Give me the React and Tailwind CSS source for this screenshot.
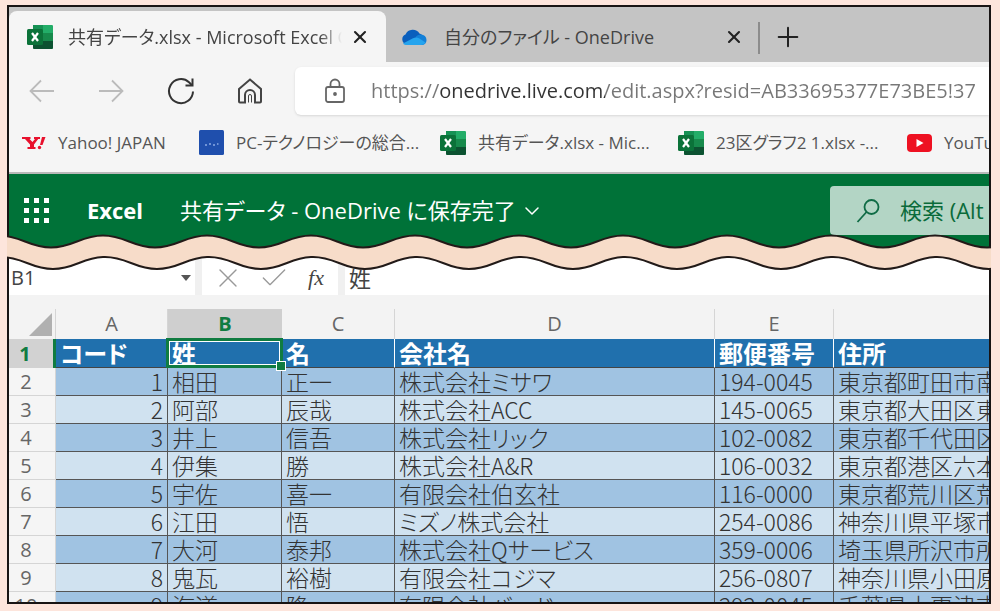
import { useState } from "react";
import { Check, ChevronDown, Plus, X } from "lucide-react";

const HEADERS = ["コード", "姓", "名", "会社名", "郵便番号", "住所"];

const ROWS = [
  [1, "相田", "正一", "株式会社ミサワ", "194-0045", "東京都町田市南成瀬"],
  [2, "阿部", "辰哉", "株式会社ACC", "145-0065", "東京都大田区東雪谷"],
  [3, "井上", "信吾", "株式会社リック", "102-0082", "東京都千代田区一番町"],
  [4, "伊集", "勝", "株式会社A&R", "106-0032", "東京都港区六本木"],
  [5, "宇佐", "喜一", "有限会社伯玄社", "116-0000", "東京都荒川区荒川"],
  [6, "江田", "悟", "ミズノ株式会社", "254-0086", "神奈川県平塚市田村"],
  [7, "大河", "泰邦", "株式会社Qサービス", "359-0006", "埼玉県所沢市所沢新町"],
  [8, "鬼瓦", "裕樹", "有限会社コジマ", "256-0807", "神奈川県小田原市"],
  [9, "海道", "隆", "有限会社バード", "292-0045", "千葉県木更津市"],
];

const COLUMNS = ["A", "B", "C", "D", "E", "F"];

function ExcelIcon() {
  return (
    <svg viewBox="0 0 26 26" className="size-[26px] shrink-0" aria-hidden="true">
      <rect x="6" y="1" width="20" height="24" rx="1.5" fill="#21a366" />
      <path d="M6 1h10v8H6z" fill="#169154" />
      <path d="M16 1h8.500a1.500 1.500 0 0 1 1.500 1.500V9H16z" fill="#23ad68" />
      <path d="M6 9h10v8H6z" fill="#107c41" />
      <path d="M6 17h20v6.500a1.500 1.500 0 0 1-1.500 1.500h-17A1.500 1.500 0 0 1 6 23.500z" fill="#0c5231" />
      <path d="M16 9h10v8H16z" fill="#178a4c" />
      <rect x="0" y="5" width="16" height="16" rx="1.500" fill="#0b7239" />
      <path d="M5 9l6 8M11 9l-6 8" stroke="#fff" strokeWidth="2.200" fill="none" />
    </svg>
  );
}

function OneDriveIcon() {
  return (
    <svg viewBox="0 0 26 18" className="h-[18px] w-[26px] shrink-0" aria-hidden="true">
      <path d="M5 16a5 5 0 0 1-.5-9.500A8 8 0 0 1 18.500 5.500a6 6 0 0 1 2 10.500z" fill="#0a5fbd" />
      <path d="M15 8.500a6.500 6.500 0 0 1 5-2 5.500 5.500 0 0 1 5.500 5.500c0 3-2 5-5 5H12z" fill="#1380d8" />
      <path d="M2 15.500l10-5.200c2-1 4-1 6 0l6.500 4.200c-1 1.700-2.500 2.500-4.500 2.500H6c-1.700 0-3-.5-4-1.500z" fill="#25a4ee" />
    </svg>
  );
}

function YahooIcon() {
  return (
    <svg viewBox="0 0 24 14" className="h-[14px] w-6 shrink-0" aria-hidden="true">
      <path
        d="M0 1h8.500v2H7.500l3 3L13 3h-1V1h6v2h-1.800L12 8.500V11h1.500v2H5.500v-2H8V8.500L3 3H0z"
        fill="#e8112d"
      />
      <path d="M20 1h3.500l-3 8H18z" fill="#e8112d" />
      <circle cx="17.500" cy="11.500" r="1.700" fill="#e8112d" />
    </svg>
  );
}

function SiteIcon() {
  return (
    <svg viewBox="0 0 25 25" className="size-[25px] shrink-0" aria-hidden="true">
      <rect width="25" height="25" rx="1.500" fill="#1f4fad" />
      <path d="M6 15h2M10 14h2M14 15h2M18 14h1.500" stroke="#6f93d6" strokeWidth="2" />
    </svg>
  );
}

function YouTubeIcon() {
  return (
    <svg viewBox="0 0 25 18" className="h-[18px] w-[25px] shrink-0" aria-hidden="true">
      <rect width="25" height="18" rx="4" fill="#ee1122" />
      <path d="M9.500 5v8l7-4z" fill="#fff" />
    </svg>
  );
}

function BackIcon() {
  return (
    <svg viewBox="0 0 26 24" className="h-6 w-[26px]" fill="none" stroke="#bbb" strokeWidth="1.800" aria-hidden="true">
      <path d="M25 12H1.500M12 1.500L1.500 12 12 22.500" />
    </svg>
  );
}

function ForwardIcon() {
  return (
    <svg viewBox="0 0 26 24" className="h-6 w-[26px]" fill="none" stroke="#bbb" strokeWidth="1.800" aria-hidden="true">
      <path d="M1 12h23.500M14 1.500L24.500 12 14 22.500" />
    </svg>
  );
}

function ReloadIcon() {
  return (
    <svg viewBox="0 0 28 28" className="size-7" fill="none" stroke="#333" strokeWidth="2" aria-hidden="true">
      <path d="M26 14.500A12 12 0 1 1 22 5.200l3 3" />
      <path d="M25.500 1.500v7h-7" />
    </svg>
  );
}

function HomeIcon() {
  return (
    <svg viewBox="0 0 26 28" className="h-7 w-[26px]" fill="none" stroke="#444" strokeWidth="2" aria-hidden="true">
      <path d="M2 12L13 2.500 24 12v12.500a1 1 0 0 1-1 1h-5V18a5 5 0 0 0-10 0v7.500H3a1 1 0 0 1-1-1z" />
      <path d="M11.500 25.500V19a1.500 1.500 0 0 1 3 0v6.500" strokeWidth="1" />
    </svg>
  );
}

function LockIcon() {
  return (
    <svg viewBox="0 0 22 26" className="h-[26px] w-[22px] shrink-0" fill="none" stroke="#666" strokeWidth="1.800" aria-hidden="true">
      <rect x="2" y="9" width="18" height="15" rx="2" />
      <path d="M6.500 9V6a4.500 4.500 0 0 1 9 0v3" />
      <circle cx="11" cy="16" r="1" fill="#555" />
    </svg>
  );
}

function SearchIcon() {
  return (
    <svg viewBox="0 0 24 26" className="h-[26px] w-6 shrink-0" fill="none" stroke="#0f6b45" strokeWidth="1.800" aria-hidden="true">
      <circle cx="15.500" cy="9" r="7" />
      <path d="M10.500 14L1.500 24" />
    </svg>
  );
}

/* Torn edge between the browser header and the sheet */
function WaveBreak() {
  return (
    <svg className="absolute inset-x-0 top-[228px] h-10 w-full" aria-hidden="true">
      <defs>
        <pattern id="wave" x="-8" width="104" height="40" patternUnits="userSpaceOnUse">
          <path
            d="M-52 14.500C-30 14.500-22 2.500 0 2.500S30 14.500 52 14.500 82 2.500 104 2.500 134 14.500 156 14.500V36C134 36 128 24 106 24S76 36 54 36 24 24 2 24-28 36-50 36z"
            fill="#f7dcc9"
            stroke="#221a18"
            strokeWidth="2"
          />
        </pattern>
      </defs>
      <rect width="100%" height="40" fill="url(#wave)" />
    </svg>
  );
}

function TabStrip() {
  return (
    <div className="flex h-[55px] bg-[#c4c4c4] text-lg text-[#444]">
      <div className="mt-1 flex w-[377px] shrink-0 items-center rounded-t-lg bg-[#f5f5f5] pr-4 pl-[18px]">
        <ExcelIcon />
        <span className="ml-[15px] flex-1 overflow-hidden whitespace-nowrap [mask-image:linear-gradient(to_right,black_92%,transparent)]">
          共有データ.xlsx - Microsoft Excel Online
        </span>
        <button type="button" aria-label="タブを閉じる" className="ml-2">
          <X className="size-5 text-[#222]" strokeWidth={2.5} />
        </button>
      </div>
      <div className="mt-1 flex w-[372px] shrink-0 items-center pr-3.5 pl-[15px]">
        <OneDriveIcon />
        <span className="ml-[17px] flex-1 whitespace-nowrap">自分のファイル - OneDrive</span>
        <button type="button" aria-label="タブを閉じる">
          <X className="size-5 text-[#222]" strokeWidth={2.5} />
        </button>
      </div>
      <div className="mt-[15px] h-8 w-0.5 bg-[#8c8c8c]" />
      <button type="button" aria-label="新しいタブ" className="ml-3 self-center pt-1">
        <Plus className="size-8 text-[#222]" strokeWidth={1.5} />
      </button>
    </div>
  );
}

function AddressBar() {
  const [url, setUrl] = useState(
    "https://onedrive.live.com/edit.aspx?resid=AB33695377E73BE5!37"
  );

  return (
    <div className="flex h-[57px] items-center pl-5">
      <button type="button" aria-label="戻る">
        <BackIcon />
      </button>
      <button type="button" aria-label="進む" className="ml-[43px]">
        <ForwardIcon />
      </button>
      <button type="button" aria-label="更新" className="ml-[43px]">
        <ReloadIcon />
      </button>
      <button type="button" aria-label="ホーム" className="ml-[42px]">
        <HomeIcon />
      </button>
      <label className="ml-8 flex h-12 flex-1 items-center overflow-hidden rounded-l-md bg-white pl-[29px] shadow-sm">
        <LockIcon />
        {/* host part of the address is drawn darker than the rest */}
        <input
          type="text"
          aria-label="アドレス"
          value={url}
          onChange={(e) => setUrl(e.target.value)}
          className="ml-[25px] w-full min-w-0 bg-[linear-gradient(to_right,#777_69px,#333_69px,#333_234px,#777_234px)] bg-clip-text text-xl text-transparent caret-black outline-none"
        />
      </label>
    </div>
  );
}

function Bookmarks() {
  return (
    <nav className="flex h-[55px] items-center overflow-hidden border-b-2 border-[#b9b9b9] pb-1.5 pl-[13px] text-[17px] whitespace-nowrap text-[#555]">
      <a href="#yahoo" className="flex w-[177px] shrink-0 items-center gap-3">
        <YahooIcon />
        Yahoo! JAPAN
      </a>
      <a href="#pc" className="flex w-[241px] shrink-0 items-center gap-3">
        <SiteIcon />
        PC-テクノロジーの総合...
      </a>
      <a href="#shared" className="flex w-[238px] shrink-0 items-center gap-3">
        <ExcelIcon />
        共有データ.xlsx - Mic...
      </a>
      <a href="#graph" className="flex w-[229px] shrink-0 items-center gap-3">
        <ExcelIcon />
        23区グラフ2 1.xlsx -...
      </a>
      <a href="#youtube" className="flex shrink-0 items-center gap-3">
        <YouTubeIcon />
        YouTube
      </a>
    </nav>
  );
}

function AppHeader() {
  return (
    <header className="flex h-[77px] items-center overflow-hidden bg-[#007238] pb-1 pl-[15px] text-[22px] whitespace-nowrap text-white">
      <button type="button" aria-label="アプリ起動ツール" className="grid shrink-0 grid-cols-3 gap-[5px]">
        {Array.from({ length: 9 }, (_, i) => (
          <span key={i} className="size-[5px] bg-white" />
        ))}
      </button>
      <span className="ml-[38px] w-[93px] shrink-0 font-bold">Excel</span>
      <button type="button" className="flex shrink-0 items-center gap-1">
        共有データ - OneDrive に保存完了
        <ChevronDown className="size-6" strokeWidth={1.5} />
      </button>
      <label className="ml-auto flex h-[49px] w-[159px] shrink-0 items-center rounded-l bg-[#b3d5c5] pl-[26px]">
        <SearchIcon />
        <input
          type="text"
          aria-label="検索"
          placeholder="検索 (Alt + Q)"
          className="ml-5 w-full min-w-0 text-[#0a6b3a] outline-none placeholder:text-[#0a6b3a]"
        />
      </label>
    </header>
  );
}

function FormulaBar() {
  return (
    <div className="flex h-11 gap-[7px] bg-[#f0f0f0] text-xl text-[#444]">
      <label className="flex w-[186px] shrink-0 items-center bg-white pt-2.5 pr-1">
        <input type="text" aria-label="名前ボックス" defaultValue="B1" className="w-full min-w-0 pl-0.5 outline-none" />
        <svg viewBox="0 0 10 6" className="h-1.5 w-2.5 shrink-0" aria-hidden="true">
          <path d="M0 0h10L5 6z" fill="#555" />
        </svg>
      </label>
      <div className="flex w-[136px] shrink-0 items-center justify-between bg-white pt-2.5 pr-2.5 pl-2.5">
        <button type="button" aria-label="キャンセル">
          <X className="size-8 text-[#999]" strokeWidth={1} />
        </button>
        <button type="button" aria-label="入力">
          <Check className="size-8 text-[#999]" strokeWidth={1} />
        </button>
        <button type="button" className="w-6 font-['Liberation_Serif',serif] text-[22px] italic">
          fx
        </button>
      </div>
      <input
        type="text"
        aria-label="数式バー"
        defaultValue="姓"
        className="w-full min-w-0 bg-white pt-2.5 pl-1 text-[22px] outline-none"
      />
    </div>
  );
}

function Sheet() {
  return (
    <div className="bg-[#f3f3f3] pt-3.5">
      <table className="w-[1425px] table-fixed border-separate border-spacing-0 whitespace-nowrap">
        <colgroup>
          <col className="w-[47px]" />
          <col className="w-[112px]" />
          <col className="w-[114px]" />
          <col className="w-[113px]" />
          <col className="w-[320px]" />
          <col className="w-[119px]" />
          <col className="w-[600px]" />
        </colgroup>
        <thead>
          <tr className="h-[30px] text-xl text-[#666]">
            <th className="border-r border-[#d5d5d5] p-0">
              <svg viewBox="0 0 23 23" className="ml-5 size-[23px]" aria-hidden="true">
                <path d="M23 0v23H0z" fill="#b0b0b0" />
              </svg>
            </th>
            {COLUMNS.map((name) => (
              <th
                key={name}
                scope="col"
                className={
                  name === "B"
                    ? "bg-[#cfcfcf] p-0 leading-none font-bold text-[#107c41]"
                    : "border-r border-[#d5d5d5] p-0 leading-none font-normal"
                }
              >
                {name}
              </th>
            ))}
          </tr>
        </thead>
        <tbody className="font-['Noto_Sans_CJK_JP',sans-serif] text-[23px]">
          <tr className="h-[29px] bg-[#2070ad] text-2xl font-bold text-white">
            <th scope="row" className="border-r-3 border-[#107c41] bg-[#d2d2d2] p-0 pr-3 font-['Open_Sans',sans-serif] text-xl leading-none font-bold text-[#107c41]">
              1
            </th>
            {HEADERS.map((title) => (
              <td
                key={title}
                className="relative border-r border-b border-r-white border-b-[#444] py-0 pr-0 pl-1 leading-none"
              >
                {title}
                {title === "姓" && (
                  <span className="absolute -inset-x-0.5 -inset-y-px z-10 border-3 border-[#107c41] outline-1 -outline-offset-4 outline-white">
                    <span className="absolute -right-1.5 -bottom-1.5 size-2.5 border border-white bg-[#107c41]" />
                  </span>
                )}
              </td>
            ))}
          </tr>
          {ROWS.map((row, i) => (
            <tr
              key={row[0]}
              className={i % 2 === 0 ? "h-7 bg-[#a0c3e2] text-[#333]" : "h-7 bg-[#d0e2f0] text-[#333]"}
            >
              <th scope="row" className="border-r border-b border-[#d5d5d5] bg-[#f5f5f5] p-0 pr-3 font-['Open_Sans',sans-serif] text-xl leading-none font-normal text-[#666]">
                {i + 2}
              </th>
              {row.map((value, col) => (
                <td
                  key={col}
                  className={
                    col === 0
                      ? "border-r border-b border-[#555] py-0 pr-1 pl-0 text-right leading-none font-light"
                      : "border-r border-b border-[#555] py-0 pr-0 pl-1 leading-none font-light"
                  }
                >
                  {value}
                </td>
              ))}
            </tr>
          ))}
        </tbody>
      </table>
    </div>
  );
}

export default function App() {
  return (
    <div className="h-screen bg-[#fde5dc] pt-[5px] pr-[9px] pb-[7px] pl-[7px] font-['Open_Sans','Noto_Sans_CJK_JP',sans-serif] [font-feature-settings:'palt']">
      <div className="relative h-full">
        <main className="h-full overflow-hidden border-2 border-[#181414] bg-[#f5f5f5]">
          <TabStrip />
          <AddressBar />
          <Bookmarks />
          <AppHeader />
          <FormulaBar />
          <Sheet />
        </main>
        <WaveBreak />
      </div>
    </div>
  );
}
